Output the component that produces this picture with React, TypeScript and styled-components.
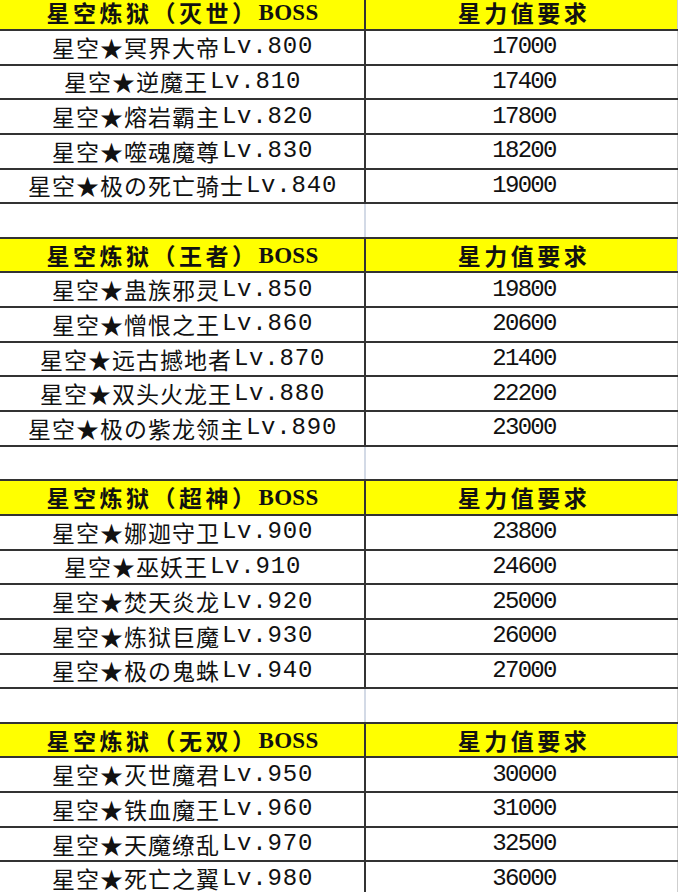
import React from "react";
import styled, { createGlobalStyle } from "styled-components";

const Global = createGlobalStyle`
  html, body {
    margin: 0;
    padding: 0;
    width: 678px;
    height: 892px;
    overflow: hidden;
    background: #ffffff;
  }
`;

const ROW_H = 34.65;
const LINE = "#333333";

const Sheet = styled.div`
  width: 678px;
  height: 892px;
  overflow: hidden;
  display: flex;
  flex-direction: column;
`;

const Body = styled.div`
  display: flex;
  flex-direction: column;
  margin-top: -3.65px;
`;

const Row = styled.div<{ $header?: boolean }>`
  display: flex;
  flex: 0 0 auto;
  height: ${ROW_H}px;
  box-sizing: border-box;
  border-bottom: 2px solid ${LINE};
  background: ${(p) => (p.$header ? "#ffff00" : "#ffffff")};
`;

const NameCell = styled.div<{ $blank?: boolean }>`
  width: 366px;
  flex: 0 0 366px;
  box-sizing: border-box;
  border-right: 2px solid ${(p) => (p.$blank ? "#d3dae6" : LINE)};
  display: flex;
  align-items: center;
  justify-content: center;
  padding-left: 1px;
`;

const ValueCell = styled.div`
  flex: 1 1 auto;
  box-sizing: border-box;
  border-right: 1px solid #cfcfcf;
  display: flex;
  align-items: center;
  justify-content: center;
  padding-left: 5px;
`;

const Cjk = styled.span<{ $bold?: boolean }>`
  font-family: "Noto Sans CJK SC", "Noto Sans CJK JP", sans-serif;
  font-size: 23px;
  line-height: 1;
  letter-spacing: ${(p) => (p.$bold ? "3.5px" : "1px")};
  font-weight: ${(p) => (p.$bold ? 700 : 400)};
  color: #111;
  white-space: nowrap;
`;

const Latin = styled.span`
  font-family: "Liberation Mono", monospace;
  font-size: 24px;
  line-height: 1;
  letter-spacing: 0.8px;
  padding-left: 2px;
  color: #111;
  white-space: nowrap;
`;

const Boss = styled.span`
  font-family: "Liberation Serif", serif;
  font-size: 23px;
  line-height: 1;
  font-weight: 700;
  letter-spacing: 0.3px;
  color: #111;
  white-space: nowrap;
`;

const Number = styled.span`
  font-family: "Liberation Mono", monospace;
  font-size: 24px;
  line-height: 1;
  letter-spacing: -1.7px;
  color: #111;
  white-space: nowrap;
`;

type BossRow = { name: string; lv: number; power: number };
type Group = { tier: string; bosses: BossRow[] };

const groups: Group[] = [
  {
    tier: "灭世",
    bosses: [
      { name: "冥界大帝", lv: 800, power: 17000 },
      { name: "逆魔王", lv: 810, power: 17400 },
      { name: "熔岩霸主", lv: 820, power: 17800 },
      { name: "噬魂魔尊", lv: 830, power: 18200 },
      { name: "极の死亡骑士", lv: 840, power: 19000 },
    ],
  },
  {
    tier: "王者",
    bosses: [
      { name: "蛊族邪灵", lv: 850, power: 19800 },
      { name: "憎恨之王", lv: 860, power: 20600 },
      { name: "远古撼地者", lv: 870, power: 21400 },
      { name: "双头火龙王", lv: 880, power: 22200 },
      { name: "极の紫龙领主", lv: 890, power: 23000 },
    ],
  },
  {
    tier: "超神",
    bosses: [
      { name: "娜迦守卫", lv: 900, power: 23800 },
      { name: "巫妖王", lv: 910, power: 24600 },
      { name: "焚天炎龙", lv: 920, power: 25000 },
      { name: "炼狱巨魔", lv: 930, power: 26000 },
      { name: "极の鬼蛛", lv: 940, power: 27000 },
    ],
  },
  {
    tier: "无双",
    bosses: [
      { name: "灭世魔君", lv: 950, power: 30000 },
      { name: "铁血魔王", lv: 960, power: 31000 },
      { name: "天魔缭乱", lv: 970, power: 32500 },
      { name: "死亡之翼", lv: 980, power: 36000 },
    ],
  },
];

export default function App() {
  return (
    <>
      <Global />
      <Sheet>
        <Body>
          {groups.map((g, gi) => (
            <React.Fragment key={g.tier}>
              <Row $header>
                <NameCell>
                  <Cjk $bold>{`星空炼狱（${g.tier}）`}</Cjk>
                  <Boss>BOSS</Boss>
                </NameCell>
                <ValueCell>
                  <Cjk $bold>星力值要求</Cjk>
                </ValueCell>
              </Row>
              {g.bosses.map((b) => (
                <Row key={b.lv}>
                  <NameCell>
                    <Cjk>{`星空★${b.name}`}</Cjk>
                    <Latin>{`Lv.${b.lv}`}</Latin>
                  </NameCell>
                  <ValueCell>
                    <Number>{b.power}</Number>
                  </ValueCell>
                </Row>
              ))}
              {gi < groups.length - 1 && (
                <Row>
                  <NameCell $blank />
                  <ValueCell />
                </Row>
              )}
            </React.Fragment>
          ))}
        </Body>
      </Sheet>
    </>
  );
}
